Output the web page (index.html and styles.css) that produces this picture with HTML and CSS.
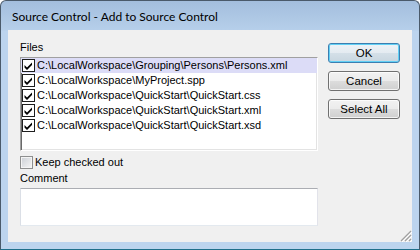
FILE: index.html
```html
<!DOCTYPE html>
<html>
<head>
<meta charset="utf-8">
<link rel="stylesheet" href="styles.css">
</head>
<body>
<div class="window">
  <div class="titlebar"><span class="title">Source Control - Add to Source Control</span></div>
  <div class="client">
    <div class="main">
      <div class="label files-label">Files</div>
      <div class="listbox">
        <div class="row selected"><span class="cb"><svg width="13" height="13" viewBox="0 0 13 13"><rect x="0.5" y="0.5" width="12" height="12" fill="#fff" stroke="#1e1e1e"/><path d="M2.5 6 L5 8.5 L10 3.5 L10 6 L5 11 L2.5 8.5 Z" fill="#000"/></svg></span><span class="path">C:\LocalWorkspace\Grouping\Persons\Persons.xml</span></div>
        <div class="row"><span class="cb"><svg width="13" height="13" viewBox="0 0 13 13"><rect x="0.5" y="0.5" width="12" height="12" fill="#fff" stroke="#1e1e1e"/><path d="M2.5 6 L5 8.5 L10 3.5 L10 6 L5 11 L2.5 8.5 Z" fill="#000"/></svg></span><span class="path">C:\LocalWorkspace\MyProject.spp</span></div>
        <div class="row"><span class="cb"><svg width="13" height="13" viewBox="0 0 13 13"><rect x="0.5" y="0.5" width="12" height="12" fill="#fff" stroke="#1e1e1e"/><path d="M2.5 6 L5 8.5 L10 3.5 L10 6 L5 11 L2.5 8.5 Z" fill="#000"/></svg></span><span class="path">C:\LocalWorkspace\QuickStart\QuickStart.css</span></div>
        <div class="row"><span class="cb"><svg width="13" height="13" viewBox="0 0 13 13"><rect x="0.5" y="0.5" width="12" height="12" fill="#fff" stroke="#1e1e1e"/><path d="M2.5 6 L5 8.5 L10 3.5 L10 6 L5 11 L2.5 8.5 Z" fill="#000"/></svg></span><span class="path">C:\LocalWorkspace\QuickStart\QuickStart.xml</span></div>
        <div class="row"><span class="cb"><svg width="13" height="13" viewBox="0 0 13 13"><rect x="0.5" y="0.5" width="12" height="12" fill="#fff" stroke="#1e1e1e"/><path d="M2.5 6 L5 8.5 L10 3.5 L10 6 L5 11 L2.5 8.5 Z" fill="#000"/></svg></span><span class="path">C:\LocalWorkspace\QuickStart\QuickStart.xsd</span></div>
      </div>
      <div class="keep"><span class="cb2"></span><span class="keep-text">Keep checked out</span></div>
      <div class="label comment-label">Comment</div>
      <div class="textbox"></div>
    </div>
    <div class="buttons">
      <button class="btn default">OK</button>
      <button class="btn">Cancel</button>
      <button class="btn">Select All</button>
    </div>
    <svg class="grip" width="12" height="12" viewBox="0 0 12 12">
      <path d="M11 1 L1 11 M11 5 L5 11 M11 9 L9 11" stroke="#a0a0a0" stroke-width="1.2"/>
      <path d="M12 2 L2 12 M12 6 L6 12 M12 10 L10 12" stroke="#ffffff" stroke-width="1"/>
    </svg>
  </div>
</div>
</body>
</html>
```
FILE: styles.css
```css
html, body {
  margin: 0;
  padding: 0;
  background: #ffffff;
}

.window {
  width: 420px;
  height: 250px;
  box-sizing: border-box;
  border: 1px solid #4a5a6a;
  border-bottom-color: #1f6f8a;
  border-radius: 6px 6px 0 0;
  background: linear-gradient(#a3bedd 0px, #b6cfea 29px, #bcd4ee 30px, #bcd4ee 100%);
  display: flex;
  flex-direction: column;
  overflow: hidden;
}

.titlebar {
  height: 29px;
  flex: none;
  display: flex;
  align-items: center;
  padding-left: 11px;
  box-sizing: border-box;
}

.title {
  font-family: Lato, "Open Sans", sans-serif;
  font-size: 12px;
  color: #000;
  margin-top: 2px;
}

.client {
  position: relative;
  height: 212px;
  margin: 0 7px;
  background: #f0f0f0;
  display: flex;
  padding: 0 12px;
  box-sizing: border-box;
  font-family: "Liberation Sans", Arial, sans-serif;
  font-size: 11px;
  color: #000;
}

.main {
  width: 298px;
  flex: none;
  display: flex;
  flex-direction: column;
}

.label {
  line-height: 13px;
  height: 13px;
}

.files-label {
  margin-top: 11px;
}

.listbox {
  margin-top: 3px;
  height: 94px;
  box-sizing: border-box;
  background: #fff;
  border: 1px solid;
  border-color: #a0a0a0 #ffffff #ffffff #a0a0a0;
  box-shadow: inset 1px 1px 0 #696969, inset -1px -1px 0 #e3e3e3;
}

.row {
  height: 15px;
  display: flex;
  align-items: center;
  padding-left: 1px;
  white-space: nowrap;
}

.row.selected {
  background: #dcdcf7;
}

.cb {
  width: 13px;
  height: 13px;
  flex: none;
  display: block;
}

.cb svg {
  display: block;
}

.path {
  margin-left: 2px;
  line-height: 13px;
}

.keep {
  margin-top: 5px;
  height: 13px;
  display: flex;
  align-items: center;
}

.cb2 {
  width: 13px;
  height: 13px;
  box-sizing: border-box;
  border: 1px solid #8e8f8f;
  background: linear-gradient(135deg, #cbcfd5, #f6f6f6);
  box-shadow: inset 0 0 0 1px #f4f4f4;
  flex: none;
}

.keep-text {
  margin-left: 2px;
  line-height: 13px;
}

.comment-label {
  margin-top: 3px;
}

.textbox {
  margin-top: 3px;
  height: 38px;
  box-sizing: border-box;
  background: #fff;
  border: 1px solid;
  border-color: #abadb3 #e2e3ea #e3e9ef #dbdfe6;
}

.buttons {
  margin-left: 10px;
  padding-top: 13px;
  display: flex;
  flex-direction: column;
  gap: 8px;
}

.btn {
  width: 72px;
  height: 20px;
  padding: 0;
  box-sizing: border-box;
  border: 1px solid #707070;
  border-radius: 3px;
  background: linear-gradient(#f2f2f2 0%, #ebebeb 50%, #dddddd 50%, #cfcfcf 100%);
  box-shadow: inset 0 0 0 1px rgba(255, 255, 255, 0.75);
  font-family: "Liberation Sans", Arial, sans-serif;
  font-size: 11.5px;
  color: #000;
}

.btn.default {
  border-color: #3c7fb1;
  box-shadow: inset 0 0 0 1px #62d0f5;
  background: linear-gradient(#eef3f7 0%, #e4ebf1 50%, #d5e0e8 50%, #c8d6e0 100%);
}

.grip {
  position: absolute;
  right: 0;
  bottom: 0;
}
```
